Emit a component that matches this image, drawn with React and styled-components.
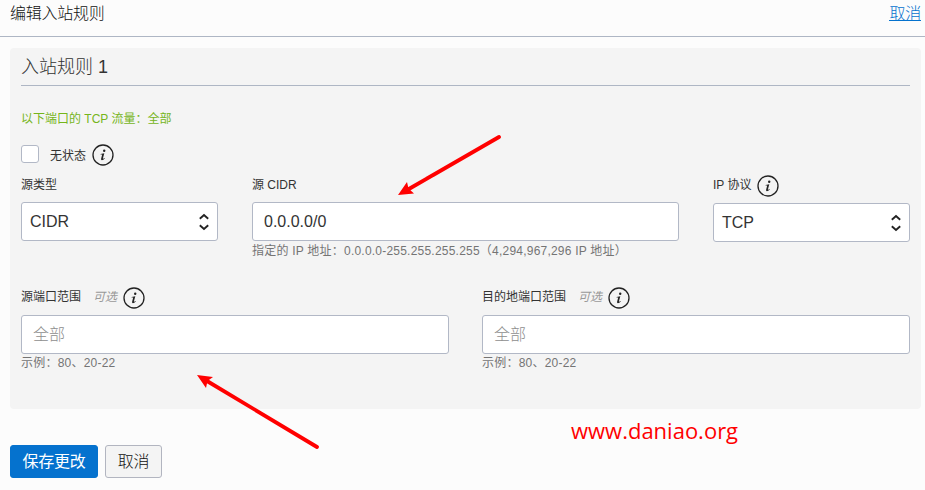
import React from "react";
import styled, { createGlobalStyle } from "styled-components";

const GlobalStyle = createGlobalStyle`
  * { box-sizing: border-box; }
  body { margin: 0; background: #fcfcfc; }
  input, button { font-family: inherit; }
`;

const Page = styled.div`
  position: relative;
  width: 925px;
  height: 490px;
  overflow: hidden;
  background: #fcfcfc;
  color: #333;
  font-family: "Liberation Sans", "Noto Sans CJK SC", sans-serif;
  font-size: 12px;
  font-weight: 400;
`;

const Header = styled.header`
  display: flex;
  justify-content: space-between;
  height: 37px;
  padding: 2px 4px 0 10px;
  border-bottom: 1px solid #aeb6c4;
  font-size: 16px;
  font-weight: 300;
  line-height: 24px;
`;

const Title = styled.span`
  color: #111;
  letter-spacing: -0.25px;
`;

const CancelLink = styled.a`
  height: 19px;
  border-bottom: 1px solid #0572ce;
  color: #0572ce;
  line-height: 23px;
  letter-spacing: -0.25px;
`;

const Panel = styled.section`
  width: 911px;
  height: 361px;
  margin: 11px 0 0 10px;
  padding: 0 11px;
  border-radius: 4px;
  background: #f4f4f4;
`;

const PanelTitle = styled.h2`
  height: 38px;
  margin: 0;
  border-bottom: 1px solid #aeb6c4;
  font-size: 18px;
  font-weight: 300;
  line-height: 39px;
`;

const Summary = styled.p`
  height: 20px;
  margin: 23px 0 0;
  color: #76b51b;
  line-height: 20px;
`;

const StatelessRow = styled.div`
  display: flex;
  height: 24px;
  margin-top: 15px;
  line-height: 24px;
`;

const Checkbox = styled.input`
  appearance: none;
  width: 18px;
  height: 18px;
  margin: 1px 11px 0 0;
  border: 1px solid #b2b8c6;
  border-radius: 3px;
  background: #fff;
`;

const FieldRow = styled.div`
  display: grid;
  grid-template-columns: ${(p) => p.$columns};
  column-gap: ${(p) => p.$gap}px;
  margin-top: ${(p) => p.$top}px;
`;

const Field = styled.div`
  padding-top: ${(p) => p.$drop || 0}px;
`;

const LabelRow = styled.div`
  display: flex;
  height: 30px;
  line-height: ${(p) => p.$line || 24}px;
`;

const Optional = styled.em`
  margin-left: 12px;
  color: #999;
`;

const Control = styled.div`
  display: flex;
  align-items: center;
  justify-content: space-between;
  height: 39px;
  padding: 0 7px 0 8px;
  border: 1px solid #b2b8c6;
  border-radius: 3px;
  background: #fff;
  font-size: 16px;
`;

const TextInput = styled.input`
  display: block;
  width: 100%;
  height: 39px;
  padding: 0 11px;
  border: 1px solid #b2b8c6;
  border-radius: 3px;
  background: #fff;
  color: #333;
  font-size: 16px;
  font-weight: 300;
  outline: none;
  &::placeholder { color: #8e8e8e; opacity: 1; }
`;

const Help = styled.div`
  height: 18px;
  color: #747474;
  line-height: ${(p) => p.$line || 18}px;
  letter-spacing: 0.22px;
  white-space: nowrap;
`;

const Actions = styled.footer`
  display: flex;
  gap: 7px;
  padding: 36px 0 0 10px;
`;

const Button = styled.button`
  width: ${(p) => (p.$primary ? 88 : 57)}px;
  height: 33px;
  padding: 0;
  border: 1px solid ${(p) => (p.$primary ? "#0572ce" : "#b2b5c0")};
  border-radius: 3px;
  background: ${(p) => (p.$primary ? "#0572ce" : "#f4f4f4")};
  color: ${(p) => (p.$primary ? "#fff" : "#111")};
  font-size: 16px;
  font-weight: ${(p) => (p.$primary ? 400 : 300)};
  line-height: 29px;
  letter-spacing: -0.2px;
`;

const IconSlot = styled.svg`
  flex: none;
  width: 22px;
  height: 22px;
  margin: ${(p) => p.$top || 0}px 0 0 6px;
`;

const Stepper = styled.svg`
  flex: none;
  width: 12px;
  height: 18px;
`;

const Annotations = styled.svg`
  position: absolute;
  inset: 0;
  width: 925px;
  height: 490px;
  pointer-events: none;
`;

const Watermark = styled.div`
  position: absolute;
  left: 571px;
  top: 414px;
  color: #f00;
  font-family: "Open Sans", "Noto Sans", sans-serif;
  font-size: 22px;
  line-height: 32px;
`;

function Info({ top }) {
  return (
    <IconSlot viewBox="0 0 22 22" $top={top}>
      <circle cx="11" cy="11" r="10" fill="none" stroke="#222" strokeWidth="1.3" />
      <circle cx="12.2" cy="6.7" r="1.2" fill="#222" />
      <path
        d="M8.600 10 12.300 9.200 10.900 14.600Q10.900 15.200 12.600 14.100L12.800 14.500Q11.200 16.200 9.900 16.200 8.800 16.100 9.100 14.700L10.200 10.500 8.600 10.500Z"
        fill="#222"
      />
    </IconSlot>
  );
}

function Select({ value }) {
  return (
    <Control>
      {value}
      <Stepper viewBox="0 0 12 18" fill="none" stroke="#222" strokeWidth="1.9">
        <path d="M1.8 5.7 6 2l4.200 3.700M1.800 12.300 6 16l4.200-3.700" />
      </Stepper>
    </Control>
  );
}

function PortField({ label }) {
  return (
    <Field>
      <LabelRow>
        {label}
        <Optional>可选</Optional>
        <Info top={2} />
      </LabelRow>
      <TextInput placeholder="全部" />
      <Help>示例：80、20-22</Help>
    </Field>
  );
}

export default function App() {
  return (
    <Page>
      <GlobalStyle />
      <Header>
        <Title>编辑入站规则</Title>
        <CancelLink>取消</CancelLink>
      </Header>
      <Panel>
        <PanelTitle>入站规则 1</PanelTitle>
        <Summary>以下端口的 TCP 流量：全部</Summary>
        <StatelessRow>
          <Checkbox type="checkbox" />
          无状态
          <Info />
        </StatelessRow>
        <FieldRow $columns="197px 427px 197px" $gap={34} $top={4}>
          <Field>
            <LabelRow $line={26}>源类型</LabelRow>
            <Select value="CIDR" />
          </Field>
          <Field>
            <LabelRow $line={26}>源 CIDR</LabelRow>
            <TextInput defaultValue="0.0.0.0/0" />
            <Help $line={20}>指定的 IP 地址：0.0.0.0-255.255.255.255（4,294,967,296 IP 地址）</Help>
          </Field>
          <Field $drop={1}>
            <LabelRow>
              IP 协议
              <Info top={2} />
            </LabelRow>
            <Select value="TCP" />
          </Field>
        </FieldRow>
        <FieldRow $columns="428px 428px" $gap={33} $top={26}>
          <PortField label="源端口范围" />
          <PortField label="目的地端口范围" />
        </FieldRow>
      </Panel>
      <Actions>
        <Button $primary>保存更改</Button>
        <Button>取消</Button>
      </Actions>
      <Watermark>www.daniao.org</Watermark>
      <Annotations viewBox="0 0 925 490" fill="#f00" stroke="#f00">
        <path d="M499 137 408 189.500M317 447 207 381" fill="none" strokeWidth="3.800" strokeLinecap="round" />
        <path d="M398 195 407 182 408.500 188.500 414 193.500ZM197 375 213 377 207.500 381 206 388Z" stroke="none" />
      </Annotations>
    </Page>
  );
}
